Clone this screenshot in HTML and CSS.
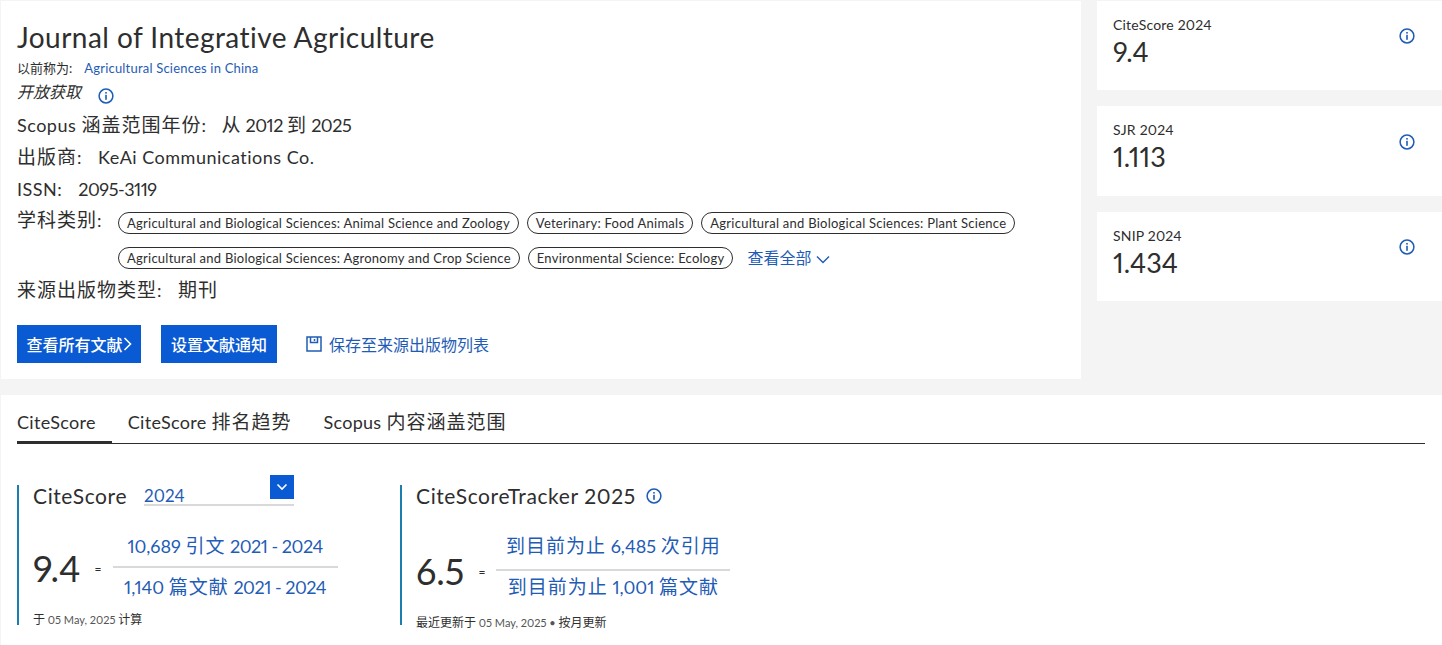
FILE: index.html
```html
<!DOCTYPE html>
<html lang="zh">
<head>
<meta charset="utf-8">
<title>Journal of Integrative Agriculture</title>
<link rel="stylesheet" href="styles.css">
</head>
<body>
<svg class="defs" width="0" height="0" aria-hidden="true">
  <symbol id="info" viewBox="0 0 16 16">
    <circle cx="8" cy="8" r="6.9" fill="none" stroke="currentColor" stroke-width="1.5"/>
    <rect x="7.2" y="6.800" width="1.6" height="5" fill="currentColor"/>
    <rect x="7.2" y="4" width="1.6" height="1.6" fill="currentColor"/>
  </symbol>
</svg>
<div class="top">
  <main class="card">
    <h1 class="title">Journal of Integrative Agriculture</h1>
    <div class="former"><span class="former-label">以前称为:</span><a class="link">Agricultural Sciences in China</a></div>
    <div class="oa"><em>开放获取</em><svg class="icon oa-icon"><use href="#info"/></svg></div>
    <div class="row r-scopus">Scopus <span class="cjk">涵盖范围年份</span>:<span class="val"><span class="cjk">从</span> <span class="dig">2012</span> <span class="cjk">到</span> <span class="dig">2025</span></span></div>
    <div class="row r-pub"><span class="cjk">出版商</span>:<span class="val">KeAi Communications Co.</span></div>
    <div class="row r-issn">ISSN:<span class="val dig">2095-3119</span></div>
    <div class="subjects">
      <div class="row sub-label"><span class="cjk">学科类别</span>:</div>
      <div class="chips">
        <span class="chip">Agricultural and Biological Sciences: Animal Science and Zoology</span>
        <span class="chip">Veterinary: Food Animals</span>
        <span class="chip">Agricultural and Biological Sciences: Plant Science</span>
        <span class="chip">Agricultural and Biological Sciences: Agronomy and Crop Science</span>
        <span class="chip">Environmental Science: Ecology</span>
        <a class="more">查看全部<svg class="chev" viewBox="0 0 14 9"><path d="M1 1.500l6 6 6-6" fill="none" stroke="currentColor" stroke-width="1.4"/></svg></a>
      </div>
    </div>
    <div class="row r-type"><span class="cjk">来源出版物类型</span>:<span class="val cjk">期刊</span></div>
    <div class="actions">
      <a class="btn btn-all">查看所有文献<svg class="btn-arrow" viewBox="0 0 8 14"><path d="M1 1l6 6-6 6" fill="none" stroke="currentColor" stroke-width="1.6"/></svg></a>
      <a class="btn btn-alert">设置文献通知</a>
      <a class="save"><svg class="save-icon" viewBox="0 0 16 16"><path d="M1 1h14v14H1zM4.500 1v5.500h7V1M8.500 3v2" fill="none" stroke="currentColor" stroke-width="1.500"/></svg>保存至来源出版物列表</a>
    </div>
  </main>
  <aside class="metrics">
    <div class="metric"><div><div class="m-label">CiteScore 2024</div><div class="m-val">9.4</div></div><svg class="icon m-icon"><use href="#info"/></svg></div>
    <div class="metric"><div><div class="m-label">SJR 2024</div><div class="m-val">1.113</div></div><svg class="icon m-icon"><use href="#info"/></svg></div>
    <div class="metric"><div><div class="m-label">SNIP 2024</div><div class="m-val">1.434</div></div><svg class="icon m-icon"><use href="#info"/></svg></div>
  </aside>
</div>
<section class="lower">
  <nav class="tabs">
    <a class="tab active">CiteScore</a>
    <a class="tab">CiteScore <span class="cjk">排名趋势</span></a>
    <a class="tab">Scopus <span class="cjk">内容涵盖范围</span></a>
  </nav>
  <div class="panels">
    <div class="panel p-left">
      <div class="p-head">
        <span class="p-title">CiteScore</span>
        <div class="select"><span>2024</span><span class="sel-btn"><svg viewBox="0 0 12 8"><path d="M1.500 1.500L6 6l4.500-4.500" fill="none" stroke="#fff" stroke-width="1.6"/></svg></span></div>
      </div>
      <div class="calc">
        <span class="score score-left">9.4</span><span class="eq">=</span>
        <div class="frac frac-left">
          <a class="num">10,689 <span class="cjk">引文</span> <span class="dig">2021 - 2024</span></a>
          <a class="den">1,140 <span class="cjk">篇文献</span> <span class="dig">2021 - 2024</span></a>
        </div>
      </div>
      <div class="note note-left"><span class="note-cjk">于</span> 05 May, 2025 <span class="note-cjk">计算</span></div>
    </div>
    <div class="panel p-right">
      <div class="p-head">
        <span class="p-title">CiteScoreTracker 2025</span><svg class="icon t-icon"><use href="#info"/></svg>
      </div>
      <div class="calc">
        <span class="score score-right">6.5</span><span class="eq">=</span>
        <div class="frac frac-right">
          <a class="num"><span class="cjk">到目前为止</span> 6,485 <span class="cjk">次引用</span></a>
          <a class="den"><span class="cjk">到目前为止</span> 1,001 <span class="cjk">篇文献</span></a>
        </div>
      </div>
      <div class="note note-right"><span class="note-cjk">最近更新于</span> 05 May, 2025 • <span class="note-cjk">按月更新</span></div>
    </div>
  </div>
</section>
</body>
</html>
```
FILE: styles.css
```css
* { box-sizing: border-box; }
html, body { margin: 0; height: 645px; overflow: hidden; }
body {
  background: #f4f4f4;
  color: #2e2e2e;
  font-family: Lato, "Noto Sans CJK SC", sans-serif;
  font-variant-numeric: proportional-nums;
  padding-left: 1px;
}
.defs { position: absolute; }
a { color: #1f5cb5; }
.icon { display: block; width: 16px; height: 16px; color: #1f5cb5; }
.cjk { font-size: 19px; letter-spacing: 1px; }
.dig { letter-spacing: -.5px; }

.top { display: flex; gap: 16px; align-items: flex-start; padding-top: 1px; }
.card { width: 1080px; height: 378px; background: #fff; padding: 20px 16px 0; }
.title { margin: 0; font-size: 28px; line-height: 32px; font-weight: 400; letter-spacing: .45px; }
.former { display: flex; gap: 12px; font-size: 13px; line-height: 16px; margin-top: 7px; letter-spacing: .2px; }
.former-label { letter-spacing: 0; }
.oa { display: flex; align-items: flex-start; gap: 17px; font-size: 16px; line-height: 20px; margin-top: 6px; }
.oa em { font-style: italic; }
.oa-icon { margin-top: 6px; }
.row { font-size: 18px; line-height: 24px; letter-spacing: .5px; }
.val { margin-left: 16px; }
.r-scopus { margin-top: 9px; }
.r-scopus .val { margin-left: 15px; word-spacing: -1px; }
.r-pub { margin-top: 8px; }
.r-issn { margin-top: 8px; }
.subjects { display: flex; margin-top: 7px; }
.sub-label { flex: none; width: 101px; }
.chips { display: flex; flex-wrap: wrap; gap: 13px 8px; width: 930px; align-items: center; padding-top: 4px; }
.chip { height: 22px; line-height: 20px; border: 1px solid #2e2e2e; border-radius: 11px; padding: 0 8px; font-size: 13px; white-space: nowrap; letter-spacing: .25px; }
.more { display: inline-flex; align-items: center; gap: 5px; height: 22px; line-height: 22px; margin-left: 6px; font-size: 16px; }
.chev { width: 14px; height: 9px; margin-top: 3px; }
.r-type { margin-top: 9px; }
.actions { display: flex; align-items: center; margin-top: 23px; }
.btn { display: flex; align-items: center; justify-content: center; height: 38px; background: #0a5ad4; color: #fff; font-size: 16px; font-weight: 500; }
.btn-all { width: 124px; margin-right: 20px; }
.btn-arrow { width: 9px; height: 14px; }
.btn-alert { width: 116px; margin-right: 29px; }
.save { display: flex; align-items: center; gap: 7px; font-size: 16px; }
.save-icon { width: 16px; height: 16px; }

.metrics { flex: 1; display: flex; flex-direction: column; gap: 16px; }
.metric { height: 90px; background: #fff; padding: 15px 27px 0 16px; display: flex; justify-content: space-between; align-items: flex-start; }
.metric:first-child { height: 89px; }
.metric:last-child { height: 89px; }
.m-label { font-size: 14px; line-height: 18px; letter-spacing: .2px; }
.m-val { font-size: 27px; line-height: 30px; margin-top: 3px; }
.m-icon { margin-top: 12px; }
.metric:nth-child(2) .m-icon { margin-top: 13px; }

.lower { margin-top: 16px; height: 250px; background: #fff; padding: 0 17px 0 16px; }
.tabs { display: flex; gap: 32px; height: 49px; border-bottom: 1px solid #2e2e2e; padding-top: 14px; }
.tab { color: #2e2e2e; font-size: 18px; line-height: 26px; height: 35px; letter-spacing: .3px; }
.tab.active { border-bottom: 3px solid #2e2e2e; padding-right: 16px; margin-right: -16px; }
.panels { display: flex; margin-top: 41px; }
.panel { border-left: 2px solid #1a7fb0; padding-left: 14px; height: 140px; }
.p-left { width: 383px; }
.p-head { display: flex; align-items: flex-start; height: 24px; }
.p-title { font-size: 21px; line-height: 22px; letter-spacing: .6px; }
.select { position: relative; width: 150px; height: 21px; margin-left: 17px; border-bottom: 2px solid #d9d9d9; font-size: 17px; line-height: 22px; color: #1f5cb5; }
.sel-btn { position: absolute; right: 0; top: -10px; width: 24px; height: 24px; background: #0a5ad4; display: flex; align-items: center; justify-content: center; }
.sel-btn svg { width: 12px; height: 8px; }
.t-icon { margin: 3px 0 0 10px; }
.calc { display: flex; align-items: center; margin-top: 25px; }
.score { font-size: 36px; line-height: 40px; }
.score-left { margin-top: 3px; }
.score-right { margin-top: 9px; }
.eq { font-size: 12px; margin-left: 14px; }
.score-left + .eq { margin-top: 3px; }
.score-right + .eq { margin-top: 9px; }
.frac { display: flex; flex-direction: column; align-items: center; font-size: 18px; line-height: 24px; }
.frac-left { width: 225px; margin-left: 11px; }
.frac-right { width: 234px; margin-left: 11px; }
.num { width: 100%; text-align: center; border-bottom: 2px solid #d9d9d9; }
.frac-left .num { padding-bottom: 8px; }
.frac-left .den { padding-top: 7px; }
.frac-right .num { padding-bottom: 11px; }
.frac-right .den { padding-top: 4px; }
.note { font-size: 11px; line-height: 14px; color: #555; }
.note-cjk { font-size: 12px; color: #2e2e2e; }
.note-left { margin-top: 14px; }
.note-right { margin-top: 17px; }
```
